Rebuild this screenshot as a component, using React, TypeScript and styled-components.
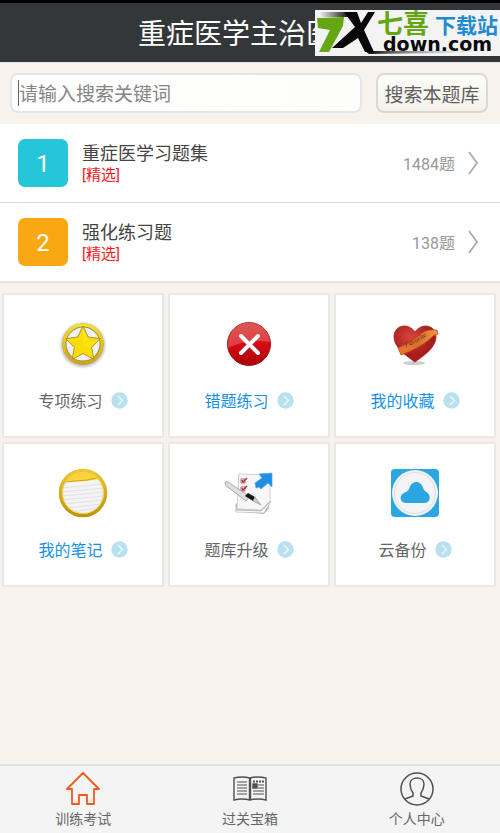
import React from "react";
import styled, { createGlobalStyle } from "styled-components";

const GlobalStyle = createGlobalStyle`
  * { box-sizing: border-box; }
  body {
    margin: 0;
    background: #f7f3ec;
    font-family: Roboto, "Noto Sans CJK SC", sans-serif;
  }
  button, input { font-family: inherit; }
`;

const Page = styled.div`
  display: flex;
  flex-direction: column;
  min-height: 100vh;
`;

const Header = styled.header`
  position: relative;
  display: flex;
  align-items: center;
  justify-content: center;
  height: 63px;
  border-top: 3px solid #000;
  border-bottom: 1px solid #e4e4e2;
  background: #343739;
`;

const Title = styled.h1`
  margin: 0;
  padding-top: 4px;
  font-size: 28px;
  font-weight: 400;
  line-height: 40px;
  color: #fff;
`;

const Watermark = styled.svg`
  position: absolute;
  right: 0;
  top: 7px;
  width: 185px;
  height: 46px;
  overflow: visible;
`;

const SearchBar = styled.form`
  display: flex;
  gap: 14px;
  padding: 10px 12px 11px 10px;
`;

const SearchInput = styled.input`
  flex: 1;
  min-width: 0;
  height: 40px;
  padding: 2px 7px 0;
  border: 2px solid #e2e6e8;
  border-radius: 8px;
  outline: none;
  background: linear-gradient(90deg, #fff, #fdfdfb);
  font-size: 19px;
  color: #444;
  &::placeholder { color: #858585; opacity: 1; }
`;

const SearchField = styled.label`
  position: relative;
  display: flex;
  flex: 1;
`;

const Caret = styled.span`
  position: absolute;
  left: 8px;
  top: 7px;
  width: 1px;
  height: 26px;
  background: #666;
`;

const SearchButton = styled.button`
  width: 112px;
  height: 40px;
  padding: 0;
  border: 2px solid #dcd9d1;
  border-radius: 8px;
  background: linear-gradient(#fdfcf9, #f5f2eb);
  font-size: 19px;
  color: #606060;
`;

const BankList = styled.ul`
  margin: 0;
  padding: 0;
  list-style: none;
  background: #fff;
  border-bottom: 2px solid #e4e3df;
`;

const BankItem = styled.li`
  & + & { border-top: 1px solid #dcdcdc; }
`;

const BankLink = styled.a`
  display: flex;
  align-items: center;
  height: 78px;
  padding: 0 20px 0 18px;
  text-decoration: none;
`;

const Badge = styled.span<{ $color: string }>`
  width: 50px;
  height: 48px;
  border-radius: 7px;
  background: ${(p) => p.$color};
  color: #fff;
  font-size: 24px;
  line-height: 50px;
  text-align: center;
`;

const BankText = styled.span`
  display: flex;
  flex: 1;
  flex-direction: column;
  padding: 2px 0 0 14px;
`;

const BankName = styled.span`
  font-size: 18px;
  line-height: 22px;
  color: #444;
`;

const BankTag = styled.span`
  font-size: 15px;
  line-height: 20px;
  color: #f81820;
`;

const Count = styled.span`
  margin-right: 12px;
  font-size: 16px;
  color: #999;
`;

const Chevron = styled.svg`
  width: 13px;
  height: 26px;
`;

const Tiles = styled.main`
  display: grid;
  grid-template-columns: repeat(3, 1fr);
  gap: 4px;
  padding: 10px 4px 0 2px;
`;

const Tile = styled.button`
  display: flex;
  flex-direction: column;
  align-items: center;
  height: 145px;
  padding: 24px 0 0;
  border: 2px solid #e8e8e6;
  border-radius: 2px;
  background: #fff;
`;

const TileIcon = styled.svg`
  width: 50px;
  height: 50px;
`;

const TileLabel = styled.span<{ $active: boolean }>`
  display: flex;
  align-items: center;
  gap: 8px;
  margin-top: 20px;
  font-size: 16px;
  line-height: 26px;
  color: ${(p) => (p.$active ? "#1592e6" : "#666")};
`;

const Arrow = styled.svg`
  width: 17px;
  height: 17px;
  margin-bottom: 4px;
`;

const Nav = styled.nav`
  display: grid;
  grid-template-columns: repeat(3, 1fr);
  height: 69px;
  margin-top: auto;
  border-top: 2px solid #e2e2e0;
  background: #f4f4f4;
`;

const NavLink = styled.a`
  display: flex;
  flex-direction: column;
  align-items: center;
  padding-top: 5px;
  font-size: 14px;
  line-height: 20px;
  color: #666;
  text-decoration: none;
`;

const NavIcon = styled.svg`
  width: 36px;
  height: 36px;
  margin-bottom: 2px;
`;

const StarIcon = () => (
  <TileIcon viewBox="0 0 50 50">
    <defs>
      <linearGradient id="gold" x2="0" y2="1">
        <stop stopColor="#f8e31b" /><stop offset="1" stopColor="#d3a50c" />
      </linearGradient>
      <radialGradient id="haze">
        <stop offset=".75" stopColor="#777" stopOpacity=".8" /><stop offset="1" stopColor="#999" stopOpacity="0" />
      </radialGradient>
    </defs>
    <circle cx="25" cy="26" r="24" fill="url(#haze)" />
    <circle cx="25" cy="25" r="18.5" fill="#eef0f6" stroke="#9b8f55" strokeWidth="4" />
    <circle cx="25" cy="25" r="19" fill="none" stroke="url(#gold)" strokeWidth="3" />
    <path d="M25 7l5.300 11 12 1.700-8.700 8.500 2.200 12L25 34.600 14.200 40.200l2.200-12-8.700-8.500 12-1.700z" fill="#f9dc08" stroke="#a98c18" strokeWidth=".9" />
    <path d="M25 10l4.500 9.500L25 25zM25 25l15-4-8 7.500z" fill="#ffea2b" opacity=".6" />
  </TileIcon>
);

const WrongIcon = () => (
  <TileIcon viewBox="0 0 50 50">
    <defs>
      <linearGradient id="red" x2="0" y2="1">
        <stop stopColor="#d83b3b" /><stop offset=".5" stopColor="#d50d12" /><stop offset="1" stopColor="#a90005" />
      </linearGradient>
      <linearGradient id="gloss" x2="0" y2="1">
        <stop stopColor="#fff" stopOpacity=".15" /><stop offset="1" stopColor="#fff" stopOpacity=".22" />
      </linearGradient>
    </defs>
    <circle cx="25" cy="25" r="21.500" fill="url(#red)" stroke="#a31318" />
    <path d="M4 25a21 21 0 0 1 42-2C35 21 16 22 4 29z" fill="url(#gloss)" />
    <path d="M17 17l17 17M34 17L17 34" stroke="#fff" strokeWidth="4" strokeLinecap="round" />
  </TileIcon>
);

const HeartIcon = () => (
  <TileIcon viewBox="0 0 50 50">
    <defs>
      <radialGradient id="heart" cx=".4" cy=".3">
        <stop stopColor="#d9453b" /><stop offset="1" stopColor="#a81d1b" />
      </radialGradient>
      <linearGradient id="ribbon"><stop stopColor="#e9762c" /><stop offset=".5" stopColor="#d9702f" /><stop offset="1" stopColor="#f29a3d" /></linearGradient>
      <path id="ribbonLine" d="M16 28Q28 24 42 13" />
    </defs>
    <ellipse cx="24" cy="44" rx="11" ry="2" fill="#aaa" opacity=".6" />
    <path d="M25 43C18 38 4 29 4 18 4 6 18 3 25 13 32 3 46 6 46 18c0 11-14 20-21 25z" fill="url(#heart)" stroke="#9c2723" strokeWidth=".8" />
    <path d="M8 29Q22 23 32 14q5-4 15-3l1 4q-5 1-8 5Q28 30 11 36z" fill="url(#ribbon)" stroke="#b6421f" strokeWidth=".7" />
    <text fontSize="7" fontFamily="Liberation Serif" fontStyle="italic" fill="#702818"><textPath href="#ribbonLine">Favorite</textPath></text>
  </TileIcon>
);

const NoteIcon = () => (
  <TileIcon viewBox="0 0 50 50">
    <defs>
      <linearGradient id="rim" x2="0" y2="1"><stop stopColor="#edc630" /><stop offset="1" stopColor="#bf9509" /></linearGradient>
      <clipPath id="noteClip"><circle cx="25" cy="25" r="21" /></clipPath>
    </defs>
    <circle cx="25" cy="25" r="22.500" fill="#f4f4f5" stroke="url(#rim)" strokeWidth="3.500" />
    <g clipPath="url(#noteClip)">
      <path d="M2 0h46v10L29 13 2 14z" fill="#fbd33b" />
      <path d="M7 14L29 12l13-3" fill="none" stroke="#d6a017" />
      <path d="M4 20l40-4M4 24l42-4M4 28l42-4M4 32l42-4M5 36l40-4M8 40l36-4M12 44l28-4" stroke="#dfe1e4" strokeWidth="1" />
    </g>
    <circle cx="25" cy="25" r="20.500" fill="none" stroke="#f0cf58" />
  </TileIcon>
);

const UpgradeIcon = () => (
  <TileIcon viewBox="0 0 50 50">
    <path d="M14 8L46 10l-1 31-5 5-28-3-1-6 3-3z" fill="#c4c4c8" />
    <path d="M15 6l31 1v26l-9 9-24-1z" fill="#f7f7f8" stroke="#c5c6ca" strokeWidth=".8" />
    <path d="M11 42l26 1 10-10-7 12-28-1z" fill="#fff" stroke="#aaa" strokeWidth=".6" />
    <path d="M17 11h4v4h-4zM17 19h4v4h-4z" fill="#fff" stroke="#b66570" />
    <path d="M18 12l1 2 4-4M18 20l1 2 4-4" fill="none" stroke="#b72c3b" strokeWidth="1.500" />
    <path d="M1 15q0-2 3-1l18 12 3 3-3 4L5 20q-4-2-4-5z" fill="#dedee0" stroke="#999" strokeWidth=".8" />
    <path d="M21 28l3-3 7 4-2 4z" fill="#171717" /><path d="M29 33l2-4 6 8z" fill="#ccc" stroke="#888" strokeWidth=".6" />
    <path d="M35 6l13-1v14l-4-4-7 6-2-2-3 1-1-5 7-5z" fill="#218ee2" stroke="#47a8ed" strokeWidth=".7" />
  </TileIcon>
);

const CloudIcon = () => (
  <TileIcon viewBox="0 0 50 50">
    <rect x="1" y="1" width="48" height="48" rx="4" fill="#2aa7e0" />
    <circle cx="25" cy="25" r="23" fill="#f1f2f4" />
    <circle cx="25" cy="25" r="20.500" fill="#f4f4f6" stroke="#dcdfe3" />
    <path d="M16 35c-7 0-7-9-1-10.500 3-1 4-3 5-6 2.500-6 10-6 12.500 0 1 3 2 4.500 4 5.500 5 3 4 11-2 11z" fill="#2aa7e0" />
  </TileIcon>
);

const tiles = [
  { label: "专项练习", active: false, Icon: StarIcon },
  { label: "错题练习", active: true, Icon: WrongIcon },
  { label: "我的收藏", active: true, Icon: HeartIcon },
  { label: "我的笔记", active: true, Icon: NoteIcon },
  { label: "题库升级", active: false, Icon: UpgradeIcon },
  { label: "云备份", active: false, Icon: CloudIcon },
];

const banks = [
  { name: "重症医学习题集", count: "1484题", color: "#26c6da" },
  { name: "强化练习题", count: "138题", color: "#f9a813" },
];

const SiteLogo = () => (
  <Watermark viewBox="0 0 185 46" role="img" aria-label="七喜下载站 7xdown.com">
    <defs>
      <linearGradient id="swoosh"><stop stopColor="#000" /><stop offset="1" stopColor="#ddd" stopOpacity="0" /></linearGradient>
      <linearGradient id="fade"><stop stopColor="#f4f4f4" /><stop offset="1" stopColor="#111" /></linearGradient>
    </defs>
    <rect width="185" height="46" fill="#f3f3f3" />
    <path d="M4 2h28l2 5H5z" fill="url(#fade)" />
    <path d="M50 41h120l-40 2-76 1z" fill="url(#swoosh)" />
    <path d="M29 2h13l4 11L53 2h7L49 20l10 22h-9l-7-14-15 10H17l23-21z" fill="#080808" />
    <path d="M2 8h4l23-1-1 9L14 42H4l11-22-12-2z" fill="#65a614" />
    <g fontFamily="Noto Sans CJK SC" fontWeight="700">
      <text x="62" y="23" fontSize="26" fill="#65a614">七喜</text>
      <text x="120" y="23" fontSize="21" fill="#218bd0">下载站</text>
    </g>
    <text x="68" y="41" fontFamily="DejaVu Sans" fontWeight="700" fontSize="19" fill="#0a0a0a">down.com</text>
  </Watermark>
);

export default function App() {
  return (
    <Page>
      <GlobalStyle />
      <Header>
        <Title>重症医学主治医师</Title>
        <SiteLogo />
      </Header>
      <SearchBar onSubmit={(e) => e.preventDefault()}>
        <SearchField>
          <SearchInput aria-label="搜索关键词" placeholder="请输入搜索关键词" />
          <Caret />
        </SearchField>
        <SearchButton type="submit">搜索本题库</SearchButton>
      </SearchBar>
      <BankList>
        {banks.map((b, i) => (
          <BankItem key={b.name}>
            <BankLink href="#">
              <Badge $color={b.color}>{i + 1}</Badge>
              <BankText>
                <BankName>{b.name}</BankName>
                <BankTag>[精选]</BankTag>
              </BankText>
              <Count>{b.count}</Count>
              <Chevron viewBox="0 0 13 26" fill="none" stroke="#aaa" strokeWidth="1.800">
                <path d="M2 2l8 11-8 11" />
              </Chevron>
            </BankLink>
          </BankItem>
        ))}
      </BankList>
      <Tiles>
        {tiles.map(({ label, active, Icon }) => (
          <Tile key={label} type="button">
            <Icon />
            <TileLabel $active={active}>
              {label}
              <Arrow viewBox="0 0 17 17">
                <circle cx="8.500" cy="8.500" r="8.200" fill="#b9e0ee" />
                <path d="M7 4l4.500 4.500L7 13" fill="none" stroke="#eef9fd" strokeWidth="1.400" />
              </Arrow>
            </TileLabel>
          </Tile>
        ))}
      </Tiles>
      <Nav>
        <NavLink href="#">
          <NavIcon viewBox="0 0 36 36" fill="none" stroke="#f25a1d" strokeWidth="1.800">
            <path d="M18 2L2 18h5v15h7v-9h8v9h7V18h5z" strokeLinejoin="round" />
          </NavIcon>
          训练考试
        </NavLink>
        <NavLink href="#">
          <NavIcon viewBox="0 0 36 36" fill="none" stroke="#505050" strokeWidth="1.400">
            <path d="M18 7Q10 5 2 7v22q8-2 16 0 8-2 16 0V7q-8-2-16 0z" />
            <path d="M18 7v22" strokeWidth="2.400" />
            <path d="M5 11h10M5 14h10M5 17h10M5 20h10M5 23h10M26 14h6M26 17h6M21 20h11M21 23h11" strokeWidth="1.200" />
            <path d="M21 10.500h11" strokeWidth="2" strokeDasharray="2 1" />
            <path d="M21 13h4v4h-4z" fill="#505050" />
          </NavIcon>
          过关宝箱
        </NavLink>
        <NavLink href="#">
          <NavIcon viewBox="0 0 36 36" fill="none" stroke="#505050" strokeWidth="1.500">
            <circle cx="18" cy="18" r="16" />
            <path d="M6 28l8-3v-3q-3-4-3-9c0-8 14-8 14 0q0 5-3 9v3l8 3" />
          </NavIcon>
          个人中心
        </NavLink>
      </Nav>
    </Page>
  );
}
